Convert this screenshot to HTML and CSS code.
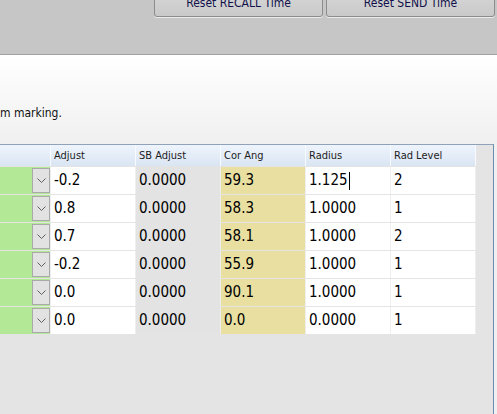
FILE: index.html
```html
<!DOCTYPE html>
<html>
<head>
<meta charset="utf-8">
<link rel="stylesheet" href="styles.css">
</head>
<body>
<div class="toolbar">
  <button class="btn">Reset RECALL Time</button>
  <button class="btn">Reset SEND Time</button>
</div>
<div class="intro">
  <p class="note">m marking.</p>
</div>
<div class="area">
  <div class="grid">
    <div class="row head">
      <div class="hc"></div>
      <div class="hc">Adjust</div>
      <div class="hc">SB Adjust</div>
      <div class="hc">Cor Ang</div>
      <div class="hc">Radius</div>
      <div class="hc">Rad Level</div>
    </div>
    <div class="row">
      <div class="c combo"><span class="dd"><svg viewBox="0 0 9 5" width="9" height="5"><path d="M0.5 0.5 L4.5 4.5 L8.5 0.5" fill="none" stroke="#606060" stroke-width="1"/></svg></span></div>
      <div class="c">-0.2</div>
      <div class="c ro">0.0000</div>
      <div class="c ang">59.3</div>
      <div class="c">1.125<span class="caret"></span></div>
      <div class="c">2</div>
    </div>
    <div class="row">
      <div class="c combo"><span class="dd"><svg viewBox="0 0 9 5" width="9" height="5"><path d="M0.5 0.5 L4.5 4.5 L8.5 0.5" fill="none" stroke="#606060" stroke-width="1"/></svg></span></div>
      <div class="c">0.8</div>
      <div class="c ro">0.0000</div>
      <div class="c ang">58.3</div>
      <div class="c">1.0000</div>
      <div class="c">1</div>
    </div>
    <div class="row">
      <div class="c combo"><span class="dd"><svg viewBox="0 0 9 5" width="9" height="5"><path d="M0.5 0.5 L4.5 4.5 L8.5 0.5" fill="none" stroke="#606060" stroke-width="1"/></svg></span></div>
      <div class="c">0.7</div>
      <div class="c ro">0.0000</div>
      <div class="c ang">58.1</div>
      <div class="c">1.0000</div>
      <div class="c">2</div>
    </div>
    <div class="row">
      <div class="c combo"><span class="dd"><svg viewBox="0 0 9 5" width="9" height="5"><path d="M0.5 0.5 L4.5 4.5 L8.5 0.5" fill="none" stroke="#606060" stroke-width="1"/></svg></span></div>
      <div class="c">-0.2</div>
      <div class="c ro">0.0000</div>
      <div class="c ang">55.9</div>
      <div class="c">1.0000</div>
      <div class="c">1</div>
    </div>
    <div class="row">
      <div class="c combo"><span class="dd"><svg viewBox="0 0 9 5" width="9" height="5"><path d="M0.5 0.5 L4.5 4.5 L8.5 0.5" fill="none" stroke="#606060" stroke-width="1"/></svg></span></div>
      <div class="c">0.0</div>
      <div class="c ro">0.0000</div>
      <div class="c ang">90.1</div>
      <div class="c">1.0000</div>
      <div class="c">1</div>
    </div>
    <div class="row">
      <div class="c combo"><span class="dd"><svg viewBox="0 0 9 5" width="9" height="5"><path d="M0.5 0.5 L4.5 4.5 L8.5 0.5" fill="none" stroke="#606060" stroke-width="1"/></svg></span></div>
      <div class="c">0.0</div>
      <div class="c ro">0.0000</div>
      <div class="c ang">0.0</div>
      <div class="c">0.0000</div>
      <div class="c">1</div>
    </div>
  </div>
</div>
</body>
</html>
```

FILE: styles.css
```css
html, body {
  margin: 0;
  padding: 0;
  height: 100%;
  overflow: hidden;
}
body {
  font-family: "DejaVu Sans", "Liberation Sans", sans-serif;
  font-stretch: condensed;
  color: #000;
  background: #dcdcdc;
  display: flex;
  flex-direction: column;
}
.toolbar {
  height: 54px;
  flex: none;
  background: #c6c6c6;
  border-bottom: 1px solid #a2a2a2;
  display: flex;
  justify-content: flex-end;
  align-items: flex-start;
  gap: 3px;
  padding-right: 2px;
  overflow: hidden;
}
.btn {
  width: 169px;
  height: 31px;
  margin-top: -14px;
  font-family: inherit;
  font-stretch: condensed;
  font-size: 12px;
  color: #10104a;
  background: linear-gradient(#dadada, #c9c9c9);
  border: 1px solid #8c8c8c;
  border-radius: 3px;
  box-shadow: 0 1px 0 #ececec;
  padding: 0;
  padding-top: 3px;
}
.intro {
  height: 88px;
  flex: none;
  background: linear-gradient(#ffffff, #f0f0f0);
}
.note {
  margin: 0;
  padding-top: 50px;
  font-size: 12px;
  line-height: 16px;
  color: #111;
}
.area {
  flex: 1;
  background: #f0f0f0;
  padding-top: 1px;
  display: flex;
}
.grid {
  width: 493px;
  border-top: 1px solid #8fa2ba;
  border-right: 1px solid #6f8cb0;
  background: #e4e4e4;
}
.row {
  display: grid;
  grid-template-columns: 50px repeat(5, 84px);
  column-gap: 1px;
  width: 475px;
  padding-right: 1px;
  background: #eeeeee;
  margin-bottom: 1px;
  height: 27px;
}
.row.head {
  height: 21px;
  background: #f7faff;
}
.hc {
  background: linear-gradient(#eef4fc, #dae5f3);
  font-size: 11px;
  line-height: 21px;
  padding-left: 3px;
  color: #1c1c1c;
  white-space: nowrap;
  overflow: hidden;
}
.c {
  background: #ffffff;
  font-size: 15px;
  line-height: 27px;
  padding-left: 3px;
  white-space: nowrap;
  display: flex;
  align-items: center;
}
.c.ro { background: #e3e3e3; }
.c.ang { background: #e8dfa0; }
.c.combo {
  background: #b3e896;
  padding: 1px 0 1px 0;
  justify-content: flex-end;
  align-items: stretch;
}
.dd {
  width: 16px;
  background: #e2e2e2;
  border: 1px solid #a9a9a9;
  display: flex;
  align-items: center;
  justify-content: center;
}
.caret {
  display: inline-block;
  width: 1px;
  height: 18px;
  background: #000;
  margin-left: 1px;
}
```
